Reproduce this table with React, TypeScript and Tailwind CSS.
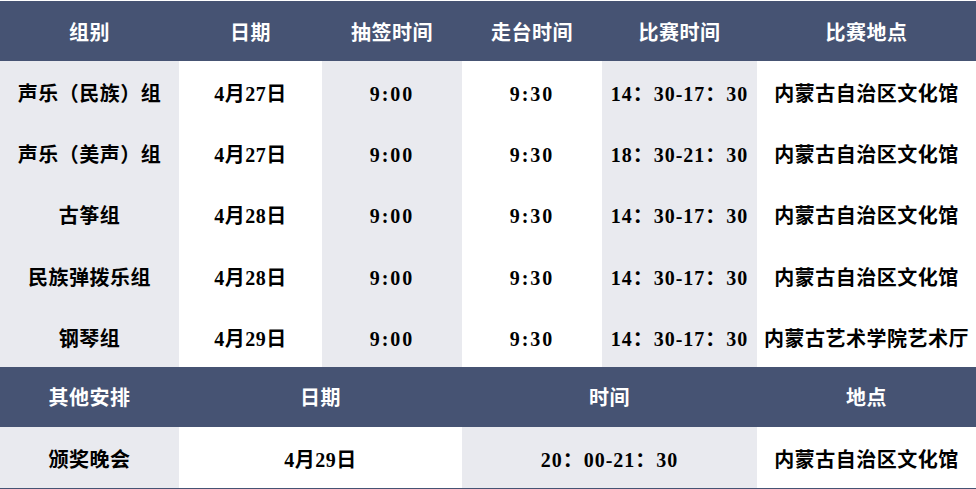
const rows = [
  ["声乐（民族）组", "4月27日", "9:00", "9:30", "14：30-17：30", "内蒙古自治区文化馆"],
  ["声乐（美声）组", "4月27日", "9:00", "9:30", "18：30-21：30", "内蒙古自治区文化馆"],
  ["古筝组", "4月28日", "9:00", "9:30", "14：30-17：30", "内蒙古自治区文化馆"],
  ["民族弹拨乐组", "4月28日", "9:00", "9:30", "14：30-17：30", "内蒙古自治区文化馆"],
  ["钢琴组", "4月29日", "9:00", "9:30", "14：30-17：30", "内蒙古艺术学院艺术厅"],
];

const heads = ["组别", "日期", "抽签时间", "走台时间", "比赛时间", "比赛地点"];
const colBg = ["bg-[#e9eaef]", "bg-white", "bg-[#e9eaef]", "bg-white", "bg-[#e9eaef]", "bg-white"];
const colTrack = ["tracking-[0.5px]", "tracking-[0.5px]", "tracking-[2px]", "tracking-[2px]", "tracking-[1px]", "tracking-[0.5px]"];

const font = { fontFamily: '"Liberation Serif", "Noto Sans CJK SC", serif' };

export default function App() {
  return (
    <div className="w-[976px] h-[489px] bg-white pt-px text-[20px] font-bold" style={font}>
      <div className="grid grid-cols-[179px_143px_140px_140px_155px_219px]">
        {heads.map((h) => (
          <div key={h} className="flex h-[60px] items-center justify-center bg-[#465373] pt-[3px] tracking-[0.5px] text-white">
            {h}
          </div>
        ))}
        {rows.map((r, i) =>
          r.map((c, j) => (
            <div
              key={`${i}-${j}`}
              className={`flex h-[61.2px] items-center justify-center pt-[5px] text-black whitespace-nowrap ${colBg[j]} ${colTrack[j]}`}
            >
              {c}
            </div>
          )),
        )}
      </div>
      <div className="grid grid-cols-[179px_283px_295px_219px]">
        {["其他安排", "日期", "时间", "地点"].map((h) => (
          <div key={h} className="flex h-[60px] items-center justify-center bg-[#465373] pt-[3px] tracking-[0.5px] text-white">
            {h}
          </div>
        ))}
        <div className="flex h-[61px] items-center justify-center bg-[#e9eaef] pt-[5px] tracking-[0.5px]">颁奖晚会</div>
        <div className="flex h-[61px] items-center justify-center bg-white pt-[5px] tracking-[0.5px]">4月29日</div>
        <div className="flex h-[61px] items-center justify-center bg-[#e9eaef] pt-[5px] tracking-[1px]">20：00-21：30</div>
        <div className="flex h-[61px] items-center justify-center bg-white pt-[5px] tracking-[0.5px]">内蒙古自治区文化馆</div>
      </div>
      <div className="h-px bg-[#465373]" />
    </div>
  );
}
